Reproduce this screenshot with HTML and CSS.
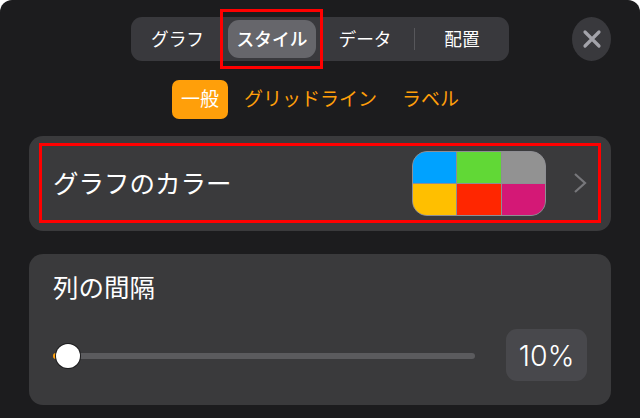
FILE: index.html
```html
<!DOCTYPE html>
<html lang="ja">
<head>
<meta charset="utf-8">
<title>グラフのスタイル</title>
<link rel="stylesheet" href="styles.css">
</head>
<body>
<main class="panel">
  <header class="top">
    <nav class="seg">
      <span class="seg-item seg-a">グラフ</span>
      <span class="seg-item seg-on">スタイル<i class="mark"></i></span>
      <span class="seg-item seg-c">データ</span>
      <span class="seg-div"></span>
      <span class="seg-item seg-d">配置</span>
    </nav>
    <button class="close" aria-label="閉じる">
      <svg width="20" height="20" viewBox="0 0 20 20"><path d="M3 3L17 17M17 3L3 17" stroke="#a3a3aa" stroke-width="3.2" stroke-linecap="round" fill="none"/></svg>
    </button>
  </header>
  <div class="tabs">
    <span class="tab tab-on">一般</span>
    <span class="tab">グリッドライン</span>
    <span class="tab">ラベル</span>
  </div>
  <section class="card card-color">
    <div class="color-row">
      <span class="color-title">グラフのカラー</span>
      <div class="swatches">
        <i class="sw s1"></i><i class="sw s2"></i><i class="sw s3"></i>
        <i class="sw s4"></i><i class="sw s5"></i><i class="sw s6"></i>
      </div>
      <svg class="chev" width="14" height="22" viewBox="0 0 14 22"><path d="M2 2L12 11L2 20" stroke="#77777b" stroke-width="2.2" fill="none"/></svg>
    </div>
  </section>
  <section class="card card-gap">
    <h2 class="gap-title">列の間隔</h2>
    <div class="slider-row">
      <div class="slider">
        <i class="fill"></i>
        <i class="thumb"></i>
      </div>
      <span class="value">10%</span>
    </div>
  </section>
</main>
</body>
</html>
```
FILE: styles.css
```css
* { box-sizing: border-box; }
html, body { margin: 0; padding: 0; background: #fff; }
body { width: 640px; height: 418px; overflow: hidden; font-family: "Noto Sans CJK JP", "Inter", sans-serif; }
.panel {
  width: 640px; height: 418px; background: #1c1c1e;
  border-radius: 12px 12px 0 0; padding: 17px 29px 0; overflow: hidden;
}
.top { display: flex; align-items: center; margin-left: 102px; height: 44px; }
.seg {
  width: 378px; height: 44px; background: #39393d; border-radius: 11px;
  display: flex; align-items: center; position: relative; color: #fff; font-size: 17.7px;
}
.seg-item { display: flex; align-items: center; justify-content: center; height: 38px; padding-bottom: 3px; }
.seg-a { width: 93px; }
.seg-on { width: 88px; margin-left: 4px; background: #66666b; border-radius: 11px; position: relative; font-weight: 500; }
.seg-c { width: 98px; }
.seg-div { width: 1px; height: 22px; background: #57575b; }
.seg-d { width: 94px; }
.mark { position: absolute; left: -8px; top: -11px; width: 103px; height: 60px; border: 3px solid #f00; }
.close {
  width: 44px; height: 44px; border-radius: 50%; background: #39393d; border: 0; padding: 0;
  margin-left: 63px; display: flex; align-items: center; justify-content: center;
}
.tabs { display: flex; align-items: center; margin: 18px 0 0 143px; height: 40px; gap: 16px; font-size: 19px; color: #ff9f0a; }
.tab { white-space: nowrap; padding-bottom: 3px; }
.tab + .tab + .tab { margin-left: 9px; }
.tab-on {
  width: 56px; height: 39px; background: #ff9f0a; color: #fff; border-radius: 7px;
  display: flex; align-items: center; justify-content: center;
}
.card { background: #3a3a3c; border-radius: 14px; width: 582px; }
.card-color { margin-top: 17px; height: 95px; padding: 7px 10px 8px; }
.color-row {
  height: 80px; border: 3px solid #f00; display: flex; align-items: center;
  padding: 0 11px 0 11px;
}
.color-title { color: #fff; font-size: 25.5px; flex: 1; padding-bottom: 3px; }
.swatches {
  width: 134px; height: 65px; border-radius: 15px; overflow: hidden; border: 1px solid #8e8e93;
  display: grid; grid-template-columns: 43px 44px 1fr; grid-template-rows: 31px 1fr; gap: 1px; background: #8e8e93;
}
.sw { display: block; }
.s1 { background: #00a2ff; }
.s2 { background: #61d836; }
.s3 { background: #929292; }
.s4 { background: #ffbf00; }
.s5 { background: #ff2600; }
.s6 { background: #d41876; }
.chev { margin-left: 27px; }
.card-gap { margin-top: 23px; height: 151px; padding: 14px 24px 0; }
.gap-title { margin: 0; color: #fff; font-size: 25.5px; font-weight: 400; line-height: 36px; }
.slider-row { display: flex; align-items: center; margin-top: 25px; }
.slider { position: relative; width: 423px; height: 6px; margin-top: 1px; background: #5b5b5e; border-radius: 3px; }
.fill { position: absolute; left: 0; top: 0; width: 14px; height: 6px; background: #ff9f0a; border-radius: 3px; }
.thumb {
  position: absolute; left: 3px; top: -9px; width: 24px; height: 24px; border-radius: 50%;
  background: #fff; box-shadow: 0 0 0 1px #1c1c1e;
}
.value {
  margin-left: 31px; width: 81px; height: 52px; background: #48484c; border-radius: 11px;
  color: #fff; font-family: "Inter", sans-serif; font-size: 28.5px; font-weight: 300;
  display: flex; align-items: center; justify-content: center;
}
```
